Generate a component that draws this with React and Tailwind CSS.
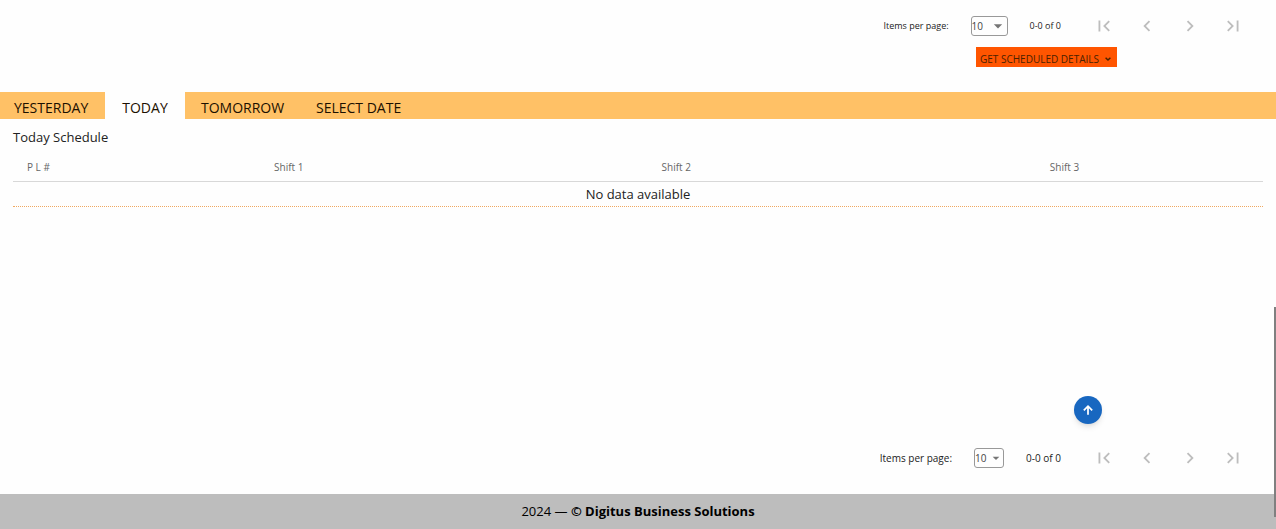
import React from "react";

const NAV_ICONS = [
  ["First page", "M18.41 16.59L13.82 12l4.59-4.59L17 6l-6 6 6 6zM6 6h2v12H6z"],
  ["Previous page", "M15.41 16.59L10.83 12l4.58-4.59L14 6l-6 6 6 6z"],
  ["Next page", "M8.59 16.59L13.17 12 8.59 7.41 10 6l6 6-6 6z"],
  ["Last page", "M5.59 7.41L10.18 12l-4.59 4.59L7 18l6-6-6-6zM16 6h2v12h-2z"],
];

function Icon({ d, className }) {
  return (
    <svg viewBox="0 0 24 24" fill="currentColor" className={className} aria-hidden="true">
      <path d={d} />
    </svg>
  );
}

function Paginator({ id, textClass, selectClass, caretClass }) {
  return (
    <div className="flex h-5 items-center justify-end pr-[22px]">
      <div className={"flex items-center gap-[22px] text-[#222] " + textClass}>
        <label htmlFor={id}>Items per page:</label>
        <div className={"grid h-5 items-center " + selectClass}>
          <select
            id={id}
            defaultValue="10"
            className="col-start-1 row-start-1 h-5 w-full appearance-none rounded-[3px] border border-[#999] bg-transparent text-[10px] text-[#444]"
          >
            <option>10</option>
            <option>25</option>
            <option>50</option>
          </select>
          <Icon
            d="M7 10l5 5 5-5z"
            className={"pointer-events-none col-start-1 row-start-1 justify-self-end text-[#757575] " + caretClass}
          />
        </div>
        <span>0-0 of 0</span>
      </div>
      <div className="ml-[21px] flex">
        {NAV_ICONS.map(([label, d]) => (
          <button key={label} type="button" disabled aria-label={label} className="flex w-[43px] justify-center text-[#bdbdbd]">
            <Icon d={d} className="size-[22px]" />
          </button>
        ))}
      </div>
    </div>
  );
}

const TABS = ["YESTERDAY", "TODAY", "TOMORROW", "SELECT DATE"];
const TAB_CLASSES = [
  "w-[105px] pl-[14px] text-left",
  "w-20 bg-[#fefefe] text-center",
  "w-[116px] pl-4 text-left",
  "w-[120px] pl-[15px] text-left",
];

export default function App() {
  return (
    <div className="relative flex min-h-screen flex-col bg-[#fefefe] font-['Open_Sans','Noto_Sans',sans-serif] text-[#222]">
      <main className="flex grow flex-col">
        <div className="pt-4">
          <Paginator id="top-size" textClass="text-[9px]" selectClass="w-[37px]" caretClass="size-5" />
        </div>
        <div className="mt-[11px] flex justify-end pr-[159px]">
          <button type="button" className="flex h-5 w-[141px] items-center justify-between bg-[#ff5500] px-1 pt-1 text-[10px] text-[#4a2200]">
            GET SCHEDULED DETAILS
            <Icon d="M7.41 7.58L12 12.17l4.59-4.59L19 10l-7 7-7-7z" className="size-[10px]" />
          </button>
        </div>

        <div role="tablist" className="mt-[25px] flex h-[27px] bg-[#ffc166] text-sm text-[#1c1000]">
          {TABS.map((tab, i) => (
            <button key={tab} type="button" role="tab" aria-selected={i === 1} className={"pt-1 leading-5 " + TAB_CLASSES[i]}>
              {tab}
            </button>
          ))}
        </div>

        <section className="px-[13px]">
          <h2 className="pt-2 text-[13px] leading-5">Today Schedule</h2>
          <table className="mt-[7px] w-full table-fixed border-separate border-spacing-0">
            <thead>
              <tr className="h-[28px] text-[10px] text-[#666]">
                <th className="w-[82px] border-b border-[#d8d8d8] pl-[14px] text-left font-normal">P L #</th>
                <th className="w-[31%] border-b border-[#d8d8d8] font-normal">Shift 1</th>
                <th className="w-[31%] border-b border-[#d8d8d8] font-normal">Shift 2</th>
                <th className="border-b border-[#d8d8d8] pr-1 font-normal">Shift 3</th>
              </tr>
            </thead>
            <tbody>
              <tr className="h-[25px]">
                <td colSpan={4} className="border-b border-dotted border-b-[#f0a860] text-center text-[13px] leading-5">
                  No data available
                </td>
              </tr>
            </tbody>
          </table>
        </section>

        <div className="mt-auto pb-[26px]">
          <Paginator id="bottom-size" textClass="text-[10px]" selectClass="w-[30px]" caretClass="size-4" />
        </div>
      </main>

      <footer className="h-[35px] bg-[#bdbdbd] text-center text-[13px] leading-[35px] text-black">
        2024 — <strong className="font-bold">© Digitus Business Solutions</strong>
      </footer>

      <button
        type="button"
        aria-label="Back to top"
        className="absolute right-[174px] bottom-[105px] flex size-7 items-center justify-center rounded-full bg-[#1867c0] text-white shadow-md"
      >
        <Icon d="M13.5 20h-3V9l-4.6 4.6-2.1-2.1L12 3.3l8.2 8.2-2.1 2.1L13.5 9z" className="size-[14px]" />
      </button>
      <div className="absolute right-0 bottom-3 h-[210px] w-0.5 bg-[#808080]" />
    </div>
  );
}
